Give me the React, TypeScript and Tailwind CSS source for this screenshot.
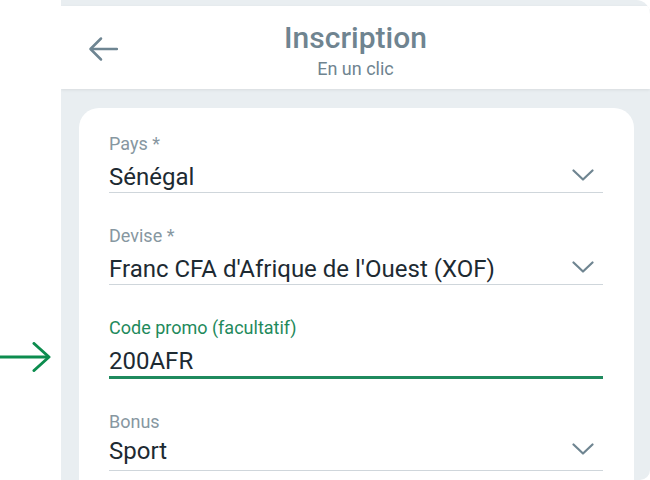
import React from 'react'

const Chevron = () => (
  <svg width="22" height="12" viewBox="0 0 22 12" fill="none" className="mr-[9px] mb-[4px]">
    <polyline points="1.5,1.5 11,10.5 20.5,1.5" stroke="#6f8591" strokeWidth="2.2" strokeLinecap="round" strokeLinejoin="round" />
  </svg>
)

interface FieldProps {
  label: string
  value: string
  select?: boolean
  active?: boolean
  tight?: boolean
}

function Field({ label, value, select, active, tight }: FieldProps) {
  return (
    <div className="flex flex-col">
      <div className={`text-[18px] leading-[20px] ${tight ? 'mb-[5px]' : 'mb-[9px]'} ${active ? 'text-[#1f8a5c]' : 'text-[#8797a1]'}`}>
        {label}
      </div>
      <div
        className={`flex items-center justify-between ${tight ? 'pb-[5px]' : 'pb-[1px]'} ${active ? 'border-b-[3px] border-[#1f8a5e]' : 'border-b border-[#cfd6db]'}`}
      >
        <span className="text-[24px] leading-[28px] text-[#1d2a32]">{value}</span>
        {select && <Chevron />}
      </div>
    </div>
  )
}

export default function App() {
  return (
    <div className="w-[650px] h-[480px] bg-white flex overflow-hidden" style={{ fontFamily: 'Roboto, "Noto Sans", sans-serif' }}>
      {/* annotation arrow */}
      <div className="w-[61px] shrink-0 pt-[342px]">
        <svg width="52" height="30" viewBox="0 0 52 30" fill="none">
          <line x1="0" y1="15" x2="49" y2="15" stroke="#0c8c4e" strokeWidth="3" />
          <polyline points="34,1.5 49,15 34,28.5" stroke="#0c8c4e" strokeWidth="3" strokeLinecap="round" strokeLinejoin="round" />
        </svg>
      </div>

      {/* phone screen */}
      <div className="flex-1 flex flex-col bg-[#e9eef1] rounded-tr-[14px] rounded-br-[10px] overflow-hidden">
        <div className="h-[6px] shrink-0" />
        <div className="h-[83px] shrink-0 bg-white grid grid-cols-[1fr_auto_1fr] shadow-[0_1px_3px_rgba(0,0,0,0.08)] relative z-10">
          <div className="pl-[27px] pt-[30px]">
            <svg width="30" height="26" viewBox="0 0 30 26" fill="none">
              <line x1="3" y1="13" x2="29" y2="13" stroke="#6e8592" strokeWidth="2.5" strokeLinecap="round" />
              <polyline points="13,2.5 2.5,13 13,23.5" stroke="#6e8592" strokeWidth="2.5" strokeLinecap="round" strokeLinejoin="round" />
            </svg>
          </div>
          <div className="flex flex-col items-center pt-[15px]">
            <div className="text-[30px] leading-[34px] font-medium text-[#6f8490]">Inscription</div>
            <div className="text-[18px] leading-[22px] mt-[3px] text-[#6f8490]">En un clic</div>
          </div>
          <div />
        </div>

        <div className="flex-1 pt-[19px] pl-[18px] pr-[16px]">
          <div className="bg-white rounded-t-[20px] h-full pt-[26px] pl-[30px] pr-[31px] flex flex-col gap-[33px]">
            <Field label="Pays *" value="Sénégal" select />
            <Field label="Devise *" value="Franc CFA d'Afrique de l'Ouest (XOF)" select />
            <Field label="Code promo (facultatif)" value="200AFR" active />
            <Field label="Bonus" value="Sport" select tight />
          </div>
        </div>
      </div>
    </div>
  )
}
